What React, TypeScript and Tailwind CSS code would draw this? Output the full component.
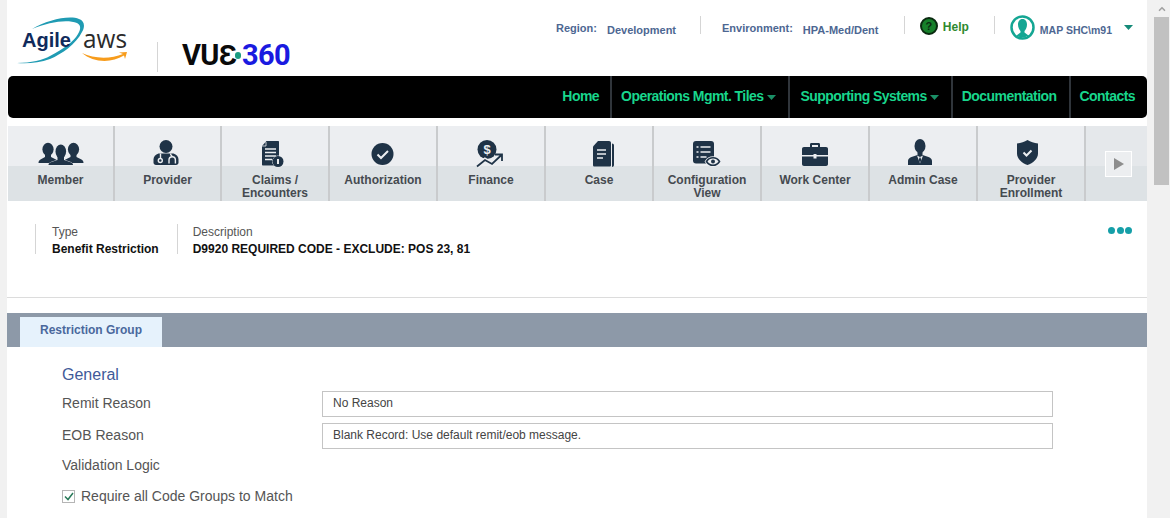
import { ReactNode } from "react";
import { ChevronUp } from "lucide-react";

const ink = "#1f3347";
const pale = "#eceef1";

// icons sit on a 60x42 canvas centred on their tile; x/y place the art
function Glyph({ children, x, y }: { children: ReactNode; x: number; y: number }) {
  return (
    <svg width="60" height="42" viewBox="0 0 60 42" fill={ink} className="shrink-0 overflow-visible">
      <g transform={`translate(${x} ${y})`}>{children}</g>
    </svg>
  );
}

const MemberIcon = () => (
  <Glyph x={7.5} y={17}>
    <ellipse cx="9.500" cy="6.300" rx="5.600" ry="6.500" />
    <path d="M6.500 11h6v3l5 2.500c1.500 1 2 2 2 3.500H0c0-1.500.5-2.500 2-3.500l4.500-2.500z" />
    <ellipse cx="35" cy="6.300" rx="5.600" ry="6.500" />
    <path d="M32 11h6v3l5 2.500c1.500 1 2 2 2 3.500H25c0-1.500.5-2.500 2-3.500l5-2.500z" />
    <path d="M19 13h6.500v4l7 2.500c1.500.5 2 1.500 2 2.500H10c0-1 .5-2 2-2.500l7-2.500z" stroke={pale} strokeWidth="0.800" paintOrder="stroke" />
    <ellipse cx="22.300" cy="8.500" rx="5.300" ry="7" />
  </Glyph>
);

const ProviderIcon = () => (
  <Glyph x={15.5} y={14}>
    <circle cx="12.500" cy="6.500" r="6.500" />
    <path d="M5 13.500h15c3 1 5 3 5 6v3c0 1.500-1 2.500-2.500 2.500h-20C1 25 0 24 0 22.500v-3c0-3 2-5 5-6z" />
    <path d="M7 13.500v5M17 13.500c0 2 1.500 2.500 2 3.500" stroke={pale} strokeWidth="1.400" fill="none" />
    <circle cx="6.800" cy="20.500" r="2" fill="none" stroke={pale} strokeWidth="1.400" />
    <path d="M15.500 23.500V20c0-2 1.500-3.200 3.200-3.200s3.200 1.200 3.200 3.200v3.500" stroke={pale} strokeWidth="1.400" fill="none" />
  </Glyph>
);

const ClaimsIcon = () => (
  <Glyph x={17} y={15}>
    <path d="M4.500 0H16c.7 0 1 .4 1 1v23.500H1c-.6 0-1-.4-1-1V5z" />
    <path d="M4 1v4H0" stroke={pale} strokeWidth="0.800" fill="none" />
    <path d="M3 8h11M3 11.500h11M3 15h11M3 18.500h7" stroke={pale} strokeWidth="1.500" />
    <circle cx="16" cy="20.500" r="5.500" stroke={pale} strokeWidth="1" paintOrder="stroke" />
    <path d="M16 18v5" stroke="#fff" strokeWidth="1.800" />
  </Glyph>
);

const AuthIcon = () => (
  <Glyph x={19} y={17}>
    <circle cx="10.500" cy="11" r="11" />
    <path d="M5.500 11.500L9 15l7-7" stroke={pale} strokeWidth="2" fill="none" />
  </Glyph>
);

const FinanceIcon = () => (
  <Glyph x={16} y={14}>
    <circle cx="10" cy="9.500" r="9.500" />
    <text x="10" y="14" fontSize="13" fontWeight="700" textAnchor="middle" fill={pale} fontFamily="Liberation Sans, sans-serif">$</text>
    <path d="M0 26.500l8-6.500 7 4 9.500-9" fill="none" stroke={pale} strokeWidth="4.500" />
    <path d="M0 26.500l8-6.500 7 4 9.500-9M18 14.500h7v6.500" fill="none" stroke={ink} strokeWidth="1.800" />
  </Glyph>
);

const CaseIcon = () => (
  <Glyph x={24} y={15}>
    <path d="M5 0h11c1.200 0 2 .8 2 2v22c0 1-.5 1.500-1.500 1.500h-15C.5 25.500 0 25 0 24V5.500z" />
    <path d="M19 2.500c1.300 0 2 .7 2 2V24c0 1.200-.8 2-2 2H3.500v-.1H19z" />
    <path d="M4 9h9M4 13h9M4 17h6" stroke={pale} strokeWidth="1.500" />
  </Glyph>
);

const ConfigIcon = () => (
  <Glyph x={16} y={15}>
    <rect x="0" y="0" width="21" height="22.500" rx="3" />
    <path d="M3.500 6h2M7.500 6h10M3.500 11h2M7.500 11h10M3.500 16h2M7.500 16h6" stroke={pale} strokeWidth="1.400" />
    <path d="M13 20.500c3-5.500 11-5.500 14 0-3 5.500-11 5.500-14 0z" fill={pale} stroke={pale} strokeWidth="2.500" />
    <path d="M13.500 20.500c3-5 10-5 13 0-3 5-10 5-13 0z" fill={pale} stroke={ink} strokeWidth="1.600" />
    <circle cx="20" cy="20.500" r="2" />
  </Glyph>
);

const WorkIcon = () => (
  <Glyph x={17} y={17}>
    <path d="M8 4.500V1.500C8 .5 8.500 0 9.500 0h7c1 0 1.500.5 1.500 1.500v3h-2V2h-6v2.500z" />
    <path d="M2 4h22c1.200 0 2 .8 2 2v6H0V6c0-1.200.8-2 2-2z" />
    <path d="M0 13.500h26V21c0 1.200-.8 2-2 2H2c-1.200 0-2-.8-2-2z" />
    <rect x="11.500" y="11" width="3" height="4.500" fill={pale} />
  </Glyph>
);

const AdminIcon = () => (
  <Glyph x={15} y={13}>
    <ellipse cx="12" cy="7" rx="5.500" ry="7" />
    <path d="M9.500 13h5v3l6 2c2.300 1 3.500 2 3.500 4v4H0v-4c0-2 1.200-3 3.500-4l6-2z" />
    <path d="M9 16.500l3 8 3-8-3 1.500z" fill={pale} />
    <path d="M11.500 18.500h1l.7 2.500-1.200 3.200-1.200-3.200z" />
  </Glyph>
);

const ShieldIcon = () => (
  <Glyph x={16} y={14}>
    <path d="M10.500 0c3 2 6.500 3 10.500 3.500v10C21 19 16 23 10.500 25 5 23 0 19 0 13.500v-10C4 3 7.500 2 10.500 0z" />
    <path d="M6.500 12.500l3 3 5-5" stroke={pale} strokeWidth="2" fill="none" />
  </Glyph>
);

const tiles: { label: string[]; icon: ReactNode; w: string }[] = [
  { label: ["Member"], icon: <MemberIcon />, w: "w-[107px]" },
  { label: ["Provider"], icon: <ProviderIcon />, w: "w-[107px]" },
  { label: ["Claims /", "Encounters"], icon: <ClaimsIcon />, w: "w-[108px]" },
  { label: ["Authorization"], icon: <AuthIcon />, w: "w-[108px]" },
  { label: ["Finance"], icon: <FinanceIcon />, w: "w-[108px]" },
  { label: ["Case"], icon: <CaseIcon />, w: "w-[108px]" },
  { label: ["Configuration", "View"], icon: <ConfigIcon />, w: "w-[108px]" },
  { label: ["Work Center"], icon: <WorkIcon />, w: "w-[108px]" },
  { label: ["Admin Case"], icon: <AdminIcon />, w: "w-[108px]" },
  { label: ["Provider", "Enrollment"], icon: <ShieldIcon />, w: "w-[108px]" },
];

function Caret({ className }: { className: string }) {
  return (
    <svg width="9" height="5" viewBox="0 0 9 5" className={className} fill="currentColor">
      <path d="M0 0h9L4.500 5z" />
    </svg>
  );
}

function NavItem({ label, caret, className }: { label: string; caret?: boolean; className: string }) {
  return (
    <div className={`flex h-full items-center border-r-2 border-[#30353b] pb-[2px] text-[14px] font-bold tracking-[-0.55px] text-[#18d68c] last:border-r-0 ${className}`}>
      {label}
      {caret && <Caret className="ml-[3px] mt-[2px] text-[#1a8f66]" />}
    </div>
  );
}

function Header() {
  return (
    <div className="flex h-[76px] items-start">
      <div className="ml-[10px] mt-[17px] flex w-[140px] flex-col">
        <svg width="115" height="50" viewBox="0 0 115 50" fill="none">
          <path d="M0 46C14 46 26 43 33 39 47 32 57 24 61 17 64 12 64 8 60 6 50 2 32 5 15 12 30 3 52-2 62 2 68 4 68 10 65 15 59 27 45 37 33 42 22 46 10 47 0 46z" fill="#1f9bb3" />
          <text x="5" y="30" fontSize="20" fontWeight="700" fill="#102a5c" fontFamily="Liberation Sans, sans-serif">Agile</text>
          <text x="66" y="31" fontSize="26" fill="#2b2b2b" fontFamily="Open Sans, sans-serif" textLength="44" lengthAdjust="spacingAndGlyphs">aws</text>
          <path d="M65 36c12 6 29 6 41 1l-4-1.500 8-.5-2 7-1-3.500c-13 8-31 7-42-2.500z" fill="#f79c1c" />
        </svg>
      </div>
      <div className="mt-[42px] h-[30px] w-px bg-[#d5d5d5]" />
      <div className="ml-[24px] mt-[37px] flex w-[108px] items-center font-['Roboto',sans-serif] text-[29px] leading-[36px] font-bold tracking-[-0.6px]">
        <span className="text-[#0a0a0a]">VUƐ</span>
        <span className="relative z-10 -ml-[1px] h-[7px] w-[7px] rounded-full bg-[#1b9c80]" />
        <span className="ml-[1px] text-[#1a1ae0]">360</span>
      </div>
      <div className="ml-[266px] mt-[13px] flex h-[30px] items-start text-[11px] font-bold text-[#4d6792]">
        <span className="mt-[7px]">Region:</span>
        <span className="ml-[10px] mt-[9px] w-[93px]">Development</span>
        <div className="mt-[3px] h-[18px] w-px bg-[#d5d5d5]" />
        <span className="ml-[21px] mt-[7px]">Environment:</span>
        <span className="ml-[10px] mt-[9px] w-[101px]">HPA-Med/Dent</span>
        <div className="mt-[3px] h-[18px] w-px bg-[#d5d5d5]" />
        <div className="ml-[15px] mt-[4px] flex h-[18px] w-[18px] items-center justify-center rounded-full border-2 border-[#0a2a10] bg-[#16802a] text-[11px] font-bold text-[#0a2a10]">?</div>
        <span className="ml-[5px] mt-[5px] w-[51px] text-[12px] text-[#2f8a2f]">Help</span>
        <div className="mt-[3px] h-[18px] w-px bg-[#d5d5d5]" />
        <svg width="25" height="25" viewBox="0 0 25 25" className="ml-[15px] mt-[2px]">
          <circle cx="12.500" cy="12.500" r="11" fill="#fff" stroke="#14a693" strokeWidth="2.500" />
          <path d="M12.500 4c3 0 4.500 2.500 4.500 5.500S15.500 15 14.500 16v1.500l4 3a11 11 0 0 1-12 0l4-3V16c-1-1-2.500-3.500-2.500-6.500S9.500 4 12.500 4z" fill="#14a693" />
        </svg>
        <span className="ml-[5px] mt-[10px] w-[84px] whitespace-nowrap text-[10.500px]">MAP SHC\m91</span>
        <Caret className="mt-[12px] text-[#148a78]" />
      </div>
    </div>
  );
}

function Nav() {
  return (
    <div className="ml-px flex h-[42px] w-[1139px] justify-end rounded-[5px] bg-black">
      <NavItem label="Home" className="px-[11px]" />
      <NavItem label="Operations Mgmt. Tiles" caret className="pl-[9px] pr-[12px]" />
      <NavItem label="Supporting Systems" caret className="pl-[11px] pr-[12px]" />
      <NavItem label="Documentation" className="pl-[9px] pr-[12px]" />
      <NavItem label="Contacts" className="pl-[9px] pr-[12px]" />
    </div>
  );
}

function TileStrip() {
  return (
    <div className="ml-px mt-[8px] flex h-[75px] w-[1139px] bg-[linear-gradient(#eceef1_0,#eceef1_40px,#dde2e5_40px,#dde2e5_100%)]">
      {tiles.map((t) => (
        <div key={t.label.join(" ") + t.w} className={`flex ${t.w} shrink-0 flex-col items-center border-r-2 border-[#c9cbcd]`}>
          <div className="flex h-[40px] items-start justify-center">{t.icon}</div>
          <div className="mt-[8px] text-center text-[12px] leading-[13px] font-bold text-[#454a50]">
            {t.label.map((l) => (
              <div key={l}>{l}</div>
            ))}
          </div>
        </div>
      ))}
      <div className="flex flex-1 bg-[linear-gradient(#e5e8eb_0,#e5e8eb_40px,#dde2e5_40px,#dde2e5_100%)] pl-[19px] pt-[25px]">
        <div className="flex h-[26px] w-[27px] items-center justify-center border border-white bg-[#eceef0]">
          <svg width="10" height="12" viewBox="0 0 10 12" fill="#8d8d8d">
            <path d="M0 0l10 6-10 6z" />
          </svg>
        </div>
      </div>
    </div>
  );
}

function Summary() {
  return (
    <div className="flex h-[97px] border-b border-[#dcdcdc] pt-[23px] text-[12px] leading-[17px]">
      <div className="ml-[28px] h-[30px] border-l border-[#d5d5d5] pl-[16px]">
        <div className="text-[#555]">Type</div>
        <div className="font-bold text-[#111]">Benefit Restriction</div>
      </div>
      <div className="ml-[18px] h-[30px] border-l border-[#d5d5d5] pl-[15px]">
        <div className="text-[#555]">Description</div>
        <div className="font-bold text-[#111]">D9920 REQUIRED CODE - EXCLUDE: POS 23, 81</div>
      </div>
      <div className="ml-auto mr-[15px] mt-[3px] flex h-[8px] gap-[1.500px]">
        <span className="h-[7px] w-[7px] rounded-full bg-[#159fa8]" />
        <span className="h-[7px] w-[7px] rounded-full bg-[#159fa8]" />
        <span className="h-[7px] w-[7px] rounded-full bg-[#159fa8]" />
      </div>
    </div>
  );
}

function Field({ label, value }: { label: string; value: string }) {
  return (
    <div className="flex h-[26px] items-center">
      <div className="w-[260px] pb-[2px] text-[14px] text-[#555]">{label}</div>
      <div className="flex h-[26px] w-[731px] items-center border border-[#c4c4c4] px-[10px] pb-[2px] text-[12px] text-[#444]">{value}</div>
    </div>
  );
}

function Form() {
  return (
    <div className="pl-[55px]">
      <div className="mt-[18px] text-[16px] leading-[20px] text-[#3f5a99]">General</div>
      <div className="mt-[6px] flex flex-col gap-[6px]">
        <Field label="Remit Reason" value="No Reason" />
        <Field label="EOB Reason" value="Blank Record: Use default remit/eob message." />
      </div>
      <div className="mt-[7px] text-[14px] leading-[18px] text-[#555]">Validation Logic</div>
      <div className="mt-[13px] flex items-center text-[14px] leading-[18px] text-[#555]">
        <span className="flex h-[13px] w-[13px] items-center justify-center border border-[#b5b5b5] bg-white">
          <svg width="10" height="9" viewBox="0 0 10 9" fill="none">
            <path d="M1 4.500l3 3 5-6.500" stroke="#2a7a5a" strokeWidth="1.500" />
          </svg>
        </span>
        <span className="ml-[6px]">Require all Code Groups to Match</span>
      </div>
    </div>
  );
}

export default function App() {
  return (
    <div className="flex h-[518px] w-[1170px] overflow-hidden bg-[#f1f1f1] font-['Liberation_Sans',Arial,sans-serif]">
      <div className="ml-[7px] h-full w-[1140px] bg-white">
        <Header />
        <Nav />
        <TileStrip />
        <Summary />
        <div className="mt-[15px] flex h-[34px] items-end bg-[#8d99a8] pl-[13px]">
          <div className="flex h-[30px] w-[142px] items-center bg-[#e6f2fc] pb-[5px] pl-[20px] text-[12px] font-bold text-[#4a689c]">Restriction Group</div>
        </div>
        <Form />
      </div>
      <div className="ml-[6px] flex w-[17px] flex-col items-center bg-[#f1f1f1]">
        <ChevronUp size={10} strokeWidth={4} className="mt-[4px] text-[#a3a3a3]" />
        <div className="mt-[3px] h-[168px] w-[15px] bg-[#c1c1c1]" />
      </div>
    </div>
  );
}
